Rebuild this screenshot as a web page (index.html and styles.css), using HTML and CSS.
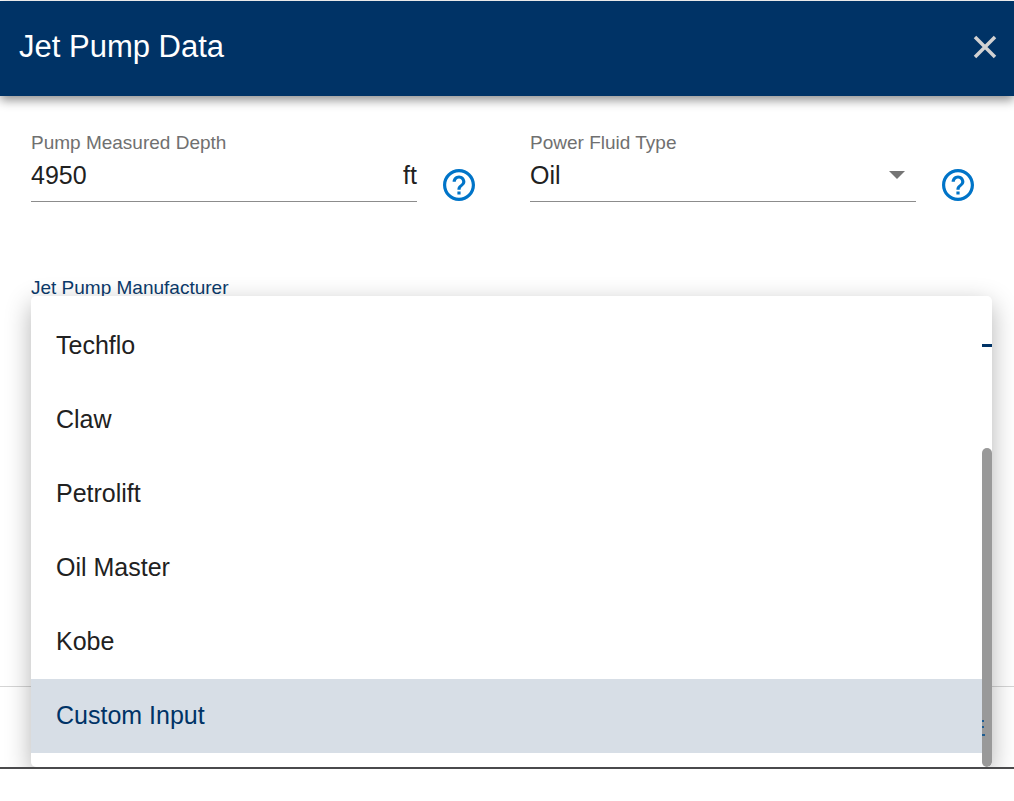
FILE: index.html
```html
<!DOCTYPE html>
<html lang="en">
<head>
<meta charset="utf-8">
<title>Jet Pump Data</title>
<link rel="stylesheet" href="styles.css">
</head>
<body>
<main class="dialog">
  <header class="dialog-header">
    <h1 class="dialog-title">Jet Pump Data</h1>
    <button class="icon-button close" type="button" aria-label="Close">
      <svg width="24" height="24" viewBox="0 0 24 24"><path d="M2 2 22 22M22 2 2 22" fill="none" stroke="currentColor" stroke-width="3.500"/></svg>
    </button>
  </header>
  <form class="dialog-body">
    <div class="row">
      <div class="cell">
        <div class="field">
          <label class="label" for="depth">Pump Measured Depth</label>
          <div class="control">
            <input class="value" id="depth" type="text" value="4950">
            <span class="unit">ft</span>
          </div>
        </div>
        <button class="icon-button help" type="button" aria-label="Help for depth">
          <svg width="32" height="32" viewBox="2 2 20 20" fill="currentColor"><path d="M11 18h2v-2h-2v2zm1-16C6.480 2 2 6.480 2 12s4.480 10 10 10 10-4.480 10-10S17.520 2 12 2zm0 18c-4.410 0-8-3.590-8-8s3.590-8 8-8 8 3.590 8 8-3.590 8-8 8zm0-14c-2.210 0-4 1.790-4 4h2c0-1.100.9-2 2-2s2 .9 2 2c0 2-3 1.750-3 5h2c0-2.250 3-2.500 3-5 0-2.210-1.790-4-4-4z"/></svg>
        </button>
      </div>
      <div class="cell">
        <div class="field">
          <label class="label" for="fluid">Power Fluid Type</label>
          <div class="control">
            <select class="value" id="fluid"><option>Oil</option><option>Water</option></select>
            <svg class="arrow" width="16" height="8" viewBox="0 0 16 8"><path d="M0 0h16L8 8z" fill="#757575"/></svg>
          </div>
        </div>
        <button class="icon-button help" type="button" aria-label="Help for fluid type">
          <svg width="32" height="32" viewBox="2 2 20 20" fill="currentColor"><path d="M11 18h2v-2h-2v2zm1-16C6.480 2 2 6.480 2 12s4.480 10 10 10 10-4.480 10-10S17.520 2 12 2zm0 18c-4.410 0-8-3.590-8-8s3.590-8 8-8 8 3.590 8 8-3.590 8-8 8zm0-14c-2.210 0-4 1.790-4 4h2c0-1.100.9-2 2-2s2 .9 2 2c0 2-3 1.750-3 5h2c0-2.250 3-2.500 3-5 0-2.210-1.790-4-4-4z"/></svg>
        </button>
      </div>
    </div>
    <div class="maker">
      <span class="label label-active" id="maker-label">Jet Pump Manufacturer</span>
      <div class="menu">
        <ul class="options" role="listbox" aria-labelledby="maker-label">
          <li class="option" role="option">Techflo</li>
          <li class="option" role="option">Claw</li>
          <li class="option" role="option">Petrolift</li>
          <li class="option" role="option">Oil Master</li>
          <li class="option" role="option">Kobe</li>
          <li class="option selected" role="option" aria-selected="true">Custom Input</li>
        </ul>
        <div class="rail">
          <div class="underline"></div>
          <div class="thumb">
            <svg width="10" height="48" viewBox="0 0 10 48"><path d="M0 2h2M0 8h2M0 16h3" stroke="#1f5d91" stroke-width="2"/></svg>
          </div>
        </div>
      </div>
    </div>
  </form>
  <footer class="dialog-footer"></footer>
</main>
</body>
</html>
```
FILE: styles.css
```css
* {
  box-sizing: border-box;
}

body {
  margin: 0;
  padding-top: 1px;
  background: #fff;
  color: #212121;
  font-family: "Liberation Sans", Arial, sans-serif;
  font-size: 25px;
}

.dialog {
  border-bottom: 2px solid #4a4a4c;
}

.dialog-header {
  display: flex;
  align-items: center;
  justify-content: space-between;
  padding: 26px 17px 29px 19px;
  background: #003366;
  color: #fff;
  box-shadow: 0 4px 10px rgba(0, 0, 0, 0.45);
}

.dialog-title {
  margin: 0;
  font-size: 31px;
  line-height: 40px;
  font-weight: 400;
}

.icon-button {
  display: flex;
  padding: 0;
  border: 0;
  background: none;
}

.close {
  color: #d2d2d2;
}

.help {
  margin-bottom: 1px;
  color: #0074c8;
}

.dialog-body {
  padding: 36px 22px 0 31px;
}

.row {
  display: grid;
  grid-template-columns: 1fr 1fr;
  gap: 55px;
  padding-right: 18px;
}

.cell {
  display: flex;
  align-items: flex-end;
  gap: 26px;
}

.field {
  flex: 1;
  min-width: 0;
}

.label {
  display: block;
  font-size: 19px;
  line-height: 22px;
  color: #707070;
}

.label-active {
  color: #0b3a6b;
}

.control {
  display: flex;
  align-items: center;
  height: 48px;
  padding-bottom: 5px;
  border-bottom: 1px solid #8c8c8c;
}

.value {
  flex: 1;
  min-width: 0;
  padding: 0;
  border: 0;
  background: none;
  color: inherit;
  font: inherit;
  appearance: none;
}

.arrow {
  margin-right: 11px;
}

.maker {
  position: relative;
  height: 484px;
  padding-top: 75px;
}

.menu {
  position: absolute;
  top: 94px;
  left: 0;
  right: 0;
  display: flex;
  overflow: hidden;
  border-radius: 5px;
  background: #fff;
  box-shadow: 0 8px 26px rgba(0, 0, 0, 0.3);
  clip-path: inset(-40px -40px 0 -40px);
}

.options {
  flex: 1;
  margin: 0;
  padding: 13px 0 14px;
  list-style: none;
}

.option {
  padding: 0 25px 2px;
  line-height: 72px;
}

.selected {
  background: #d7dee6;
  color: #003366;
}

.rail {
  display: flex;
  flex-direction: column;
  justify-content: space-between;
  width: 10px;
  padding-top: 48px;
}

.underline {
  height: 3px;
  background: #003366;
}

.thumb {
  height: 319px;
  padding-top: 271px;
  border-radius: 5px;
  background: #999;
}

.thumb svg {
  display: block;
}

.dialog-footer {
  height: 81px;
  border-top: 1px solid #d5d5d5;
}
```
